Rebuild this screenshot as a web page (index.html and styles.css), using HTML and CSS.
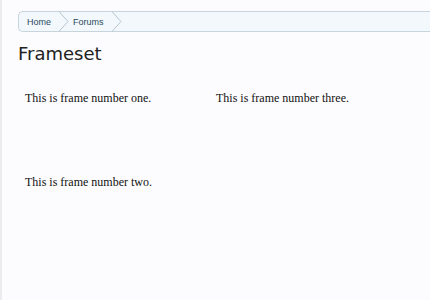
FILE: index.html
```html
<!DOCTYPE html>
<html>
<head>
<meta charset="utf-8">
<link rel="stylesheet" href="styles.css">
</head>
<body>
<div class="page">
  <nav class="crumbs">
    <a class="crumb" href="#">Home</a>
    <svg class="arrow" width="11" height="21" viewBox="0 0 11 21"><polyline points="0.5,0 10,10.5 0.5,21" fill="#f2f8fc" stroke="#b7c5cf" stroke-width="1"/></svg>
    <a class="crumb" href="#">Forums</a>
    <svg class="arrow" width="11" height="21" viewBox="0 0 11 21"><polyline points="0.5,0 10,10.5 0.5,21" fill="#f2f8fc" stroke="#b7c5cf" stroke-width="1"/></svg>
  </nav>
  <h1 class="title">Frameset</h1>
  <div class="frameset">
    <div class="frame"><p>This is frame number one.</p></div>
    <div class="frame"><p>This is frame number three.</p></div>
    <div class="frame wide"><p>This is frame number two.</p></div>
  </div>
</div>
</body>
</html>
```
FILE: styles.css
```css
html, body {
  margin: 0;
  height: 100%;
  background: #fcfcfe;
}
.page {
  box-sizing: border-box;
  height: 100%;
  border-left: 2px solid #ececef;
  padding-left: 15px;
  padding-top: 11px;
  display: flex;
  flex-direction: column;
}
.crumbs {
  margin-left: 1px;
  height: 19px;
  border: 1px solid #c7d4dc;
  border-right: none;
  border-radius: 5px 0 0 5px;
  background: #f2f8fc;
  display: flex;
  align-items: center;
  padding-left: 8px;
}
.crumb {
  font-family: "Liberation Sans", Arial, sans-serif;
  font-size: 9px;
  color: #2d4a5c;
  text-decoration: none;
}
.arrow {
  display: block;
  margin: -1px 4px 0 7px;
  height: 21px;
  align-self: flex-start;
}
.title {
  margin: 11px 0 0 1px;
  font-family: "DejaVu Sans", Verdana, sans-serif;
  font-weight: normal;
  font-size: 18px;
  line-height: 22px;
  color: #222222;
}
.frameset {
  margin-top: 18px;
  flex: 1;
  display: grid;
  grid-template-columns: 191px 1fr;
  grid-template-rows: 84px 1fr;
}
.frame {
  padding: 8px;
}
.frame.wide {
  grid-column: 1 / 3;
}
.frame p {
  margin: 0;
  font-family: "Liberation Serif", "Times New Roman", serif;
  font-size: 12px;
  color: #111111;
}
```
